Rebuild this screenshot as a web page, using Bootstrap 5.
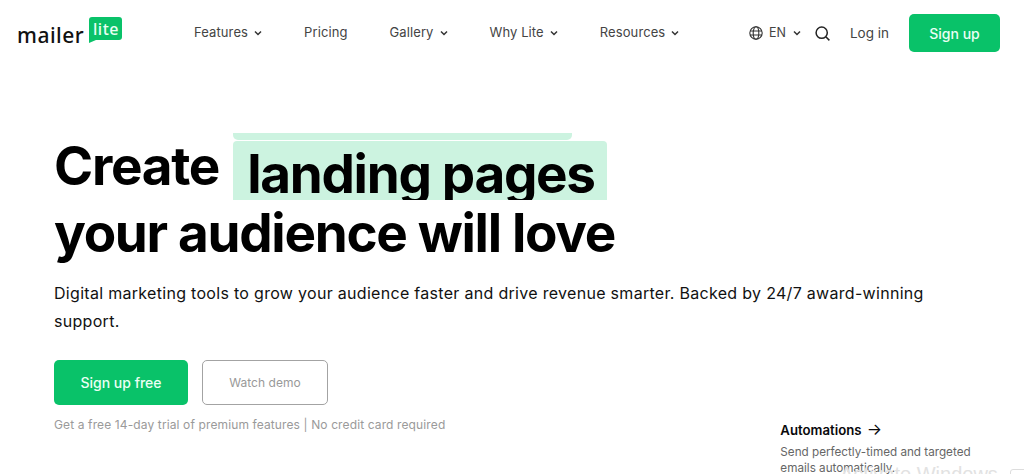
<!DOCTYPE html>
<html lang="en">
<head>
  <meta charset="UTF-8" />
  <meta name="viewport" content="width=device-width, initial-scale=1" />
  <title>MailerLite</title>
  <link href="https://cdn.jsdelivr.net/npm/bootstrap@5.3.2/dist/css/bootstrap.min.css" rel="stylesheet" />
  <style>
    html, body { height: 474px; overflow: hidden; }
    body { font-family: Inter, "Liberation Sans", sans-serif; color: #09090b; background: #fff; }
    .top-bar { height: 66px; padding: 14px 24px 0 17px; }
    .brand-box { width: 177px; height: 38px; color: #111; }
    .brand-word { font-family: "Noto Sans", sans-serif; font-size: 21px; font-weight: 500; line-height: 1; margin-top: 11px; letter-spacing: .5px; }
    .brand-bubble { margin: 3px 0 0 5px; }
    .menu-link { font-size: 13px; color: #444; text-decoration: none; line-height: 36px; letter-spacing: .1px; }
    .menu-link svg { margin-left: 6px; vertical-align: 1px; }
    .menu-main { gap: 42px; }
    .tool-link { font-size: 14px; color: #444; }
    .btn-mint { background: #09c269; color: #eafff4; border: 0; border-radius: 5px; font-weight: 500; }
    .btn-mint:hover { background: #08a85b; color: #fff; }
    .btn-top { width: 91px; height: 38px; font-size: 14px; padding: 0; }
    .lang-code { font-size: 12.5px; margin: 0 7px 0 6px; }
    .search-ico { margin: 0 20px 0 14px; }
    .login-link { font-size: 13.5px; margin-right: 20px; letter-spacing: 0; }
    .hero { padding: 67px 0 0 54px; }
    .hero-title { font-size: 53px; font-weight: 700; line-height: 67px; letter-spacing: -1.3px; margin: 0; color: #000; }
    .mark-wrap { position: relative; display: inline-block; width: 374px; height: 59px; margin-left: 3px; background: #ccf3e0; border-radius: 4px 4px 0 0; vertical-align: top; margin-top: 8px; }
    .mark-wrap::before { content: ""; position: absolute; left: 0; top: -8px; width: 339px; height: 7px; background: #ccf3e0; border-radius: 0 0 5px 5px; }
    .mark-text { display: block; height: 59px; overflow: hidden; padding-left: 14px; line-height: 67px; }
    .hero-lead { font-size: 16px; line-height: 28px; width: 900px; margin: 12px 0 0; color: #111; letter-spacing: .3px; }
    .btn-cta { width: 134px; height: 45px; font-size: 14px; padding: 0; }
    .btn-ghost { width: 126px; height: 45px; font-size: 12px; padding: 0; color: #999; border: 1px solid #a3a3a3; border-radius: 5px; background: #fff; letter-spacing: .05px; }
    .cta-row { gap: 14px; margin-top: 25px; }
    .hero-note { font-size: 12px; color: #9a9a9a; margin: 11px 0 0; letter-spacing: .12px; }
    .feat-box { width: 210px; margin: 86px 0 0 335px; }
    .feat-title { font-size: 13.2px; font-weight: 600; margin: 0; line-height: 18px; }
    .feat-arrow { font-size: 16px; line-height: 1; font-weight: 400; margin-left: 2px; }
    .feat-text { font-size: 11.7px; line-height: 16px; color: #666; margin: 5px 0 0; }
    .os-mark { position: absolute; left: 840px; top: 462px; font-size: 20px; color: #e2e2e2; font-family: "Liberation Sans", sans-serif; line-height: 24px; white-space: nowrap; }
    .os-tab { position: absolute; left: 1010px; top: 469px; width: 20px; height: 12px; border: 1px solid #ddd; border-radius: 3px; }
  </style>
</head>
<body>
  <nav class="top-bar d-flex align-items-start">
    <div class="brand-box d-flex align-items-start">
      <span class="brand-word">mailer</span>
      <svg class="brand-bubble" width="33" height="26" viewBox="0 0 33 26" aria-hidden="true"><path d="M3 0h27a3 3 0 0 1 3 3v17a3 3 0 0 1-3 3H7l-7 3V3a3 3 0 0 1 3-3z" fill="#09c269"/><text x="17" y="17.5" fill="#eafff4" font-size="16" font-weight="500" text-anchor="middle" letter-spacing=".5" font-family="Noto Sans, sans-serif">lite</text></svg>
    </div>
    <div class="menu-main d-flex">
      <a class="menu-link" href="#">Features<svg width="8" height="6" viewBox="0 0 8 6"><path d="M1 1.5l3 3 3-3" fill="none" stroke="#333" stroke-width="1.5"/></svg></a>
      <a class="menu-link" href="#">Pricing</a>
      <a class="menu-link" href="#">Gallery<svg width="8" height="6" viewBox="0 0 8 6"><path d="M1 1.5l3 3 3-3" fill="none" stroke="#333" stroke-width="1.5"/></svg></a>
      <a class="menu-link" href="#">Why Lite<svg width="8" height="6" viewBox="0 0 8 6"><path d="M1 1.5l3 3 3-3" fill="none" stroke="#333" stroke-width="1.5"/></svg></a>
      <a class="menu-link" href="#">Resources<svg width="8" height="6" viewBox="0 0 8 6"><path d="M1 1.5l3 3 3-3" fill="none" stroke="#333" stroke-width="1.5"/></svg></a>
    </div>
    <div class="ms-auto d-flex align-items-center tool-link" style="height:38px">
      <svg width="14" height="14" viewBox="0 0 14 14" fill="none" stroke="#333" stroke-width="1.1"><circle cx="7" cy="7" r="6.2"/><ellipse cx="7" cy="7" rx="2.8" ry="6.2"/><path d="M1 5h12M1 9h12"/></svg>
      <span class="lang-code">EN</span>
      <svg width="8" height="6" viewBox="0 0 8 6"><path d="M1 1.5l3 3 3-3" fill="none" stroke="#333" stroke-width="1.5"/></svg>
      <svg class="search-ico" width="15" height="15" viewBox="0 0 15 15" fill="none" stroke="#222" stroke-width="1.5"><circle cx="6.7" cy="6.7" r="5.6"/><path d="M10.8 10.8l3.6 3.6"/></svg>
      <a class="menu-link login-link" href="#">Log in</a>
      <button class="btn btn-mint btn-top">Sign up</button>
    </div>
  </nav>
  <main class="hero">
    <h1 class="hero-title">Create <span class="mark-wrap"><span class="mark-text">landing pages</span></span><br>your audience will love</h1>
    <p class="hero-lead">Digital marketing tools to grow your audience faster and drive revenue smarter. Backed by 24/7 award-winning support.</p>
    <div class="d-flex align-items-start">
      <div>
        <div class="d-flex cta-row">
          <button class="btn btn-mint btn-cta">Sign up free</button>
          <button class="btn btn-ghost">Watch demo</button>
        </div>
        <p class="hero-note">Get a free 14-day trial of premium features | No credit card required</p>
      </div>
      <div class="feat-box">
        <p class="feat-title">Automations <span class="feat-arrow">→</span></p>
        <p class="feat-text">Send perfectly-timed and targeted emails automatically.</p>
      </div>
    </div>
  </main>
  <div class="os-mark">Activate Windows</div>
  <div class="os-tab"></div>
</body>
</html>
